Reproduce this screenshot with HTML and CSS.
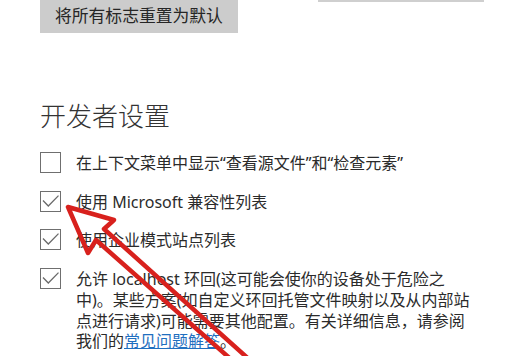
FILE: index.html
```html
<!DOCTYPE html>
<html lang="zh-CN">
<head>
<meta charset="utf-8">
<title>开发者设置</title>
<link rel="stylesheet" href="styles.css">
</head>
<body>
<div class="page">
  <div class="top-row">
    <div class="reset-btn">将所有标志重置为默认</div>
    <div class="top-field"></div>
  </div>
  <h2 class="heading">开发者设置</h2>
  <div class="options">
    <div class="opt">
      <span class="box"></span>
      <span class="label">在上下文菜单中显示“查看源文件”和“检查元素”</span>
    </div>
    <div class="opt">
      <span class="box"><svg class="tick" viewBox="0 0 21 21"><path d="M3 9.5 L8.3 15 L18.5 4.6"/></svg></span>
      <span class="label">使用 Microsoft 兼容性列表</span>
    </div>
    <div class="opt">
      <span class="box"><svg class="tick" viewBox="0 0 21 21"><path d="M3 9.5 L8.3 15 L18.5 4.6"/></svg></span>
      <span class="label">使用企业模式站点列表</span>
    </div>
    <div class="opt">
      <span class="box"><svg class="tick" viewBox="0 0 21 21"><path d="M3 9.5 L8.3 15 L18.5 4.6"/></svg></span>
      <span class="label">允许 localhost 环回(这可能会使你的设备处于危险之<br>中)。某些方案(如自定义环回托管文件映射以及从内部站<br>点进行请求)可能需要其他配置。有关详细信息，请参阅<br>我们的<a class="link" href="#">常见问题解答</a>。</span>
    </div>
  </div>
</div>
<svg class="arrow" viewBox="0 0 518 356" width="518" height="356">
  <path d="M68 207 L114 220 L104 229 L252 362 M68 207 L88 253 L96 240 L234 362" />
</svg>
</body>
</html>
```

FILE: styles.css
```css
html, body {
  margin: 0;
  padding: 0;
  background: #ffffff;
}
body {
  position: relative;
  width: 518px;
  height: 356px;
  overflow: hidden;
  font-family: "Noto Sans", "Noto Sans CJK SC", sans-serif;
  color: #2b2b2b;
}
.page {
  padding-left: 40px;
}
.top-row {
  display: flex;
  align-items: flex-start;
  height: 33px;
}
.reset-btn {
  background: #cccccc;
  height: 33px;
  line-height: 32px;
  padding: 0 15px;
  font-size: 16.8px;
  color: #262626;
  white-space: nowrap;
}
.top-field {
  margin-left: 80px;
  width: 166px;
  height: 2px;
  background: #cfcfcf;
}
.heading {
  margin: 65px 0 0 0;
  font-size: 26px;
  line-height: 36px;
  font-weight: 300;
  color: #333333;
  letter-spacing: 0;
}
.options {
  display: flex;
  flex-direction: column;
  gap: 17px;
  margin-top: 18px;
}
.opt {
  display: flex;
  align-items: flex-start;
  gap: 15px;
}
.box {
  flex: none;
  box-sizing: border-box;
  width: 21px;
  height: 21px;
  border: 1px solid #6f6f6f;
  position: relative;
}
.tick {
  position: absolute;
  left: -1px;
  top: -1px;
  width: 21px;
  height: 21px;
}
.tick path {
  fill: none;
  stroke: #6a6a6a;
  stroke-width: 1.3;
}
.label {
  font-size: 16px;
  line-height: 20.7px;
  padding-top: 1px;
  white-space: nowrap;
}
.link {
  color: #1f6fc0;
  text-decoration: underline;
}
.arrow {
  position: absolute;
  left: 0;
  top: 0;
  pointer-events: none;
}
.arrow path {
  fill: none;
  stroke: #d8211d;
  stroke-width: 4.5;
  stroke-linejoin: round;
  stroke-linecap: round;
}
```
